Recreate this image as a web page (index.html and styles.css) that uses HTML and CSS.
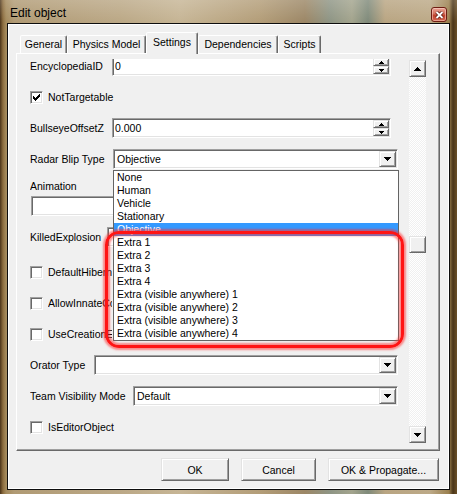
FILE: index.html
```html
<!DOCTYPE html>
<html lang="en">
<head>
  <meta charset="UTF-8">
  <title>Edit object</title>
  <link rel="stylesheet" href="styles.css">
</head>
<body>

  <div class="window">
    <div class="titlebar">
      <span class="title">Edit object</span>
      <div class="close-btn">
        <svg width="9" height="8" viewBox="0 0 9 8">
          <path d="M1.5 1L7.5 7M7.5 1L1.5 7" stroke="#5a1a10" stroke-width="3.4"/>
          <path d="M1.5 1L7.5 7M7.5 1L1.5 7" stroke="#fff" stroke-width="1.8"/>
        </svg>
      </div>
    </div>

    <div class="client">
      <div class="tabs">
        <div class="tab tab-general">General</div>
        <div class="tab tab-physics">Physics Model</div>
        <div class="tab tab-settings tab-active">Settings</div>
        <div class="tab tab-deps">Dependencies</div>
        <div class="tab tab-scripts">Scripts</div>
      </div>

      <div class="tab-panel">
        <div class="scroll-view">
          <div class="scroll-content">

            <div class="field-row">
              <span class="label">EncyclopediaID</span>
              <div class="edit">
                <span class="edit-text">0</span>
                <div class="spin">
                  <div class="spin-btn"><svg width="5" height="3"><path d="M2 0h1v1H2zM1 1h3v1H1zM0 2h5v1H0z"/></svg></div>
                  <div class="spin-btn"><svg width="5" height="3"><path d="M0 0h5v1H0zM1 1h3v1H1zM2 2h1v1H2z"/></svg></div>
                </div>
              </div>
            </div>

            <div class="field-row">
              <div class="check">
                <svg width="7" height="7"><path d="M6 0h1v3H6zM5 1h1v3H5zM4 2h1v3H4zM3 3h1v3H3zM2 4h1v3H2zM1 3h1v3H1zM0 2h1v3H0z"/></svg>
              </div>
              <span class="check-label">NotTargetable</span>
            </div>

            <div class="field-row">
              <span class="label">BullseyeOffsetZ</span>
              <div class="edit">
                <span class="edit-text">0.000</span>
                <div class="spin">
                  <div class="spin-btn"><svg width="5" height="3"><path d="M2 0h1v1H2zM1 1h3v1H1zM0 2h5v1H0z"/></svg></div>
                  <div class="spin-btn"><svg width="5" height="3"><path d="M0 0h5v1H0zM1 1h3v1H1zM2 2h1v1H2z"/></svg></div>
                </div>
              </div>
            </div>

            <div class="field-row">
              <span class="label">Radar Blip Type</span>
              <div class="combo combo-radar">
                <span class="combo-text">Objective</span>
                <div class="combo-btn"><svg width="7" height="4"><path d="M0 0h7v1H0zM1 1h5v1H1zM2 2h3v1H2zM3 3h1v1H3z"/></svg></div>
              </div>
            </div>

            <div class="field-block">
              <span class="label">Animation</span>
              <div class="edit edit-wide"><span class="edit-text"></span></div>
            </div>

            <div class="field-row">
              <span class="label">KilledExplosion</span>
              <div class="combo combo-killed">
                <span class="combo-text"></span>
                <div class="combo-btn"><svg width="7" height="4"><path d="M0 0h7v1H0zM1 1h5v1H1zM2 2h3v1H2zM3 3h1v1H3z"/></svg></div>
              </div>
            </div>

            <!-- ces libellés sont coupés par la liste ouverte -->
            <div class="field-row row-spaced">
              <div class="check"></div>
              <span class="check-label clipped">DefaultHibernationActive</span>
            </div>

            <div class="field-row">
              <div class="check"></div>
              <span class="check-label clipped">AllowInnateConversations</span>
            </div>

            <div class="field-row">
              <div class="check"></div>
              <span class="check-label clipped">UseCreationEffect</span>
            </div>

            <div class="field-row">
              <span class="label">Orator Type</span>
              <div class="combo combo-orator">
                <span class="combo-text"></span>
                <div class="combo-btn"><svg width="7" height="4"><path d="M0 0h7v1H0zM1 1h5v1H1zM2 2h3v1H2zM3 3h1v1H3z"/></svg></div>
              </div>
            </div>

            <div class="field-row">
              <span class="label">Team Visibility Mode</span>
              <div class="combo combo-team">
                <span class="combo-text">Default</span>
                <div class="combo-btn"><svg width="7" height="4"><path d="M0 0h7v1H0zM1 1h5v1H1zM2 2h3v1H2zM3 3h1v1H3z"/></svg></div>
              </div>
            </div>

            <div class="field-row">
              <div class="check"></div>
              <span class="check-label">IsEditorObject</span>
            </div>

          </div>
        </div>

        <!-- barre de défilement -->
        <div class="vscroll">
          <div class="sb-btn"><svg width="7" height="4"><path d="M3 0h1v1H3zM2 1h3v1H2zM1 2h5v1H1zM0 3h7v1H0z"/></svg></div>
          <div class="sb-track"><div class="sb-thumb"></div></div>
          <div class="sb-btn"><svg width="7" height="4"><path d="M0 0h7v1H0zM1 1h5v1H1zM2 2h3v1H2zM3 3h1v1H3z"/></svg></div>
        </div>
      </div>

      <div class="buttons">
        <div class="btn btn-ok">OK</div>
        <div class="btn btn-cancel">Cancel</div>
        <div class="btn btn-propagate">OK &amp; Propagate...</div>
      </div>
    </div>

    <!-- liste déroulante ouverte -->
    <ul class="dropdown-list">
      <li>None</li>
      <li>Human</li>
      <li>Vehicle</li>
      <li>Stationary</li>
      <li class="selected">Objective</li>
      <li>Extra 1</li>
      <li>Extra 2</li>
      <li>Extra 3</li>
      <li>Extra 4</li>
      <li>Extra (visible anywhere) 1</li>
      <li>Extra (visible anywhere) 2</li>
      <li>Extra (visible anywhere) 3</li>
      <li>Extra (visible anywhere) 4</li>
    </ul>

    <div class="highlight"></div>
  </div>

</body>
</html>
```

FILE: styles.css
```css
* {
  box-sizing: border-box;
}
body {
  margin: 0;
  font-family: "Liberation Sans", Arial, sans-serif;
  font-size: 10.5px;
  color: #000;
  background: #6b5028;
}
.window {
  position: relative;
  width: 457px;
  height: 494px;
  overflow: hidden;
  display: flex;
  flex-direction: column;
  background:
    linear-gradient(180deg, rgba(255, 255, 255, 0.18), rgba(255, 255, 255, 0) 22px),
    linear-gradient(90deg, #4a3318 0, #8c6d3f 3px, #a48a5c 6px, #b09a74 14px, #bba886 120px,
      #c6b595 180px, #b39d78 260px, #9c8766 305px, #8e9585 330px, #a3a48d 352px,
      #7f8a7a 368px, #b9a582 385px, #bca987 430px, #9a7f4e 449px, #4a3518 453px, #6b5028 457px);
}
.titlebar {
  height: 23px;
  display: flex;
  justify-content: space-between;
  align-items: flex-start;
  padding: 0 10px;
}
.title {
  font-size: 12px;
  line-height: 15px;
  margin-top: 6px;
}
.close-btn {
  width: 16px;
  height: 15px;
  margin-top: 7px;
  border: 1px solid #6e1d12;
  border-radius: 3px;
  background: linear-gradient(#eaa597, #d36e5a 45%, #c0412c 55%, #d5664f);
  box-shadow: inset 0 0 0 1px rgba(255, 220, 210, 0.5);
  display: flex;
  align-items: center;
  justify-content: center;
}

/* zone client */
.client {
  margin: 0 7px;
  height: 467px;
  border: 1px solid #0d0d0d;
  box-shadow: inset 0 0 0 1px #fff;
  background: #f0f0f0;
  display: flex;
  flex-direction: column;
}
.tabs {
  display: flex;
  align-items: flex-end;
  height: 21px;
  margin: 8px 0 0 12px;
  position: relative;
  z-index: 1;
}
.tab {
  height: 18px;
  padding-top: 2px;
  text-align: center;
  white-space: nowrap;
  background: #f0f0f0;
  border: 1px solid;
  border-bottom: none;
  border-color: #fff #696969 transparent #fff;
  border-radius: 2px 2px 0 0;
  box-shadow: inset -1px 0 #a0a0a0;
}
.tab-active {
  height: 22px;
  margin-bottom: -1px;
  padding-top: 3px;
}
.tab-general { width: 47px; }
.tab-physics { width: 79px; }
.tab-settings { width: 52px; }
.tab-deps { width: 80px; }
.tab-scripts { width: 43px; }

.tab-panel {
  margin-left: 8px;
  width: 424px;
  height: 398px;
  border: 1px solid;
  border-color: #fff #696969 #696969 #fff;
  box-shadow: inset -1px -1px #a0a0a0;
  padding: 5px 13px 6px 13px;
  display: flex;
}
.scroll-view {
  flex: 1;
  overflow: hidden;
}
.scroll-content {
  margin-top: -3px;
  display: flex;
  flex-direction: column;
}
.field-row {
  display: flex;
  align-items: center;
  height: 20px;
  margin-top: 11px;
}
.field-row:first-child {
  margin-top: 0;
}
.row-spaced {
  margin-top: 15px;
}
.field-block {
  display: flex;
  flex-direction: column;
  margin-top: 11px;
}
.field-block .label {
  height: 13px;
  line-height: 13px;
}
.label,
.check-label {
  white-space: nowrap;
}
.check-label {
  margin-left: 5px;
}
.clipped {
  max-width: 64px;
  overflow: hidden;
}

/* champs creusés */
.edit,
.combo,
.check {
  background: #fff;
  border: 1px solid;
  border-color: #a0a0a0 #fff #fff #a0a0a0;
  box-shadow: inset 1px 1px #696969, inset -1px -1px #e3e3e3;
}
.edit {
  width: 279px;
  height: 20px;
  margin: 0 14px 0 auto;
  padding: 1px;
  display: flex;
  align-items: center;
}
.edit-text {
  flex: 1;
  padding-left: 1px;
}
.edit-wide {
  width: 360px;
  margin: 3px 0 0 1px;
}
.spin {
  width: 16px;
  align-self: stretch;
  display: flex;
  flex-direction: column;
}
.combo {
  height: 20px;
  margin: 0 7px 0 auto;
  padding: 1px;
  display: flex;
  align-items: center;
}
.combo-text {
  flex: 1;
  padding-left: 2px;
}
.combo-radar { width: 285px; }
.combo-killed { width: 291px; }
.combo-orator { width: 304px; }
.combo-team { width: 265px; }
.check {
  width: 13px;
  height: 13px;
  flex-shrink: 0;
  display: flex;
  align-items: center;
  justify-content: center;
}

/* éléments en relief */
.spin-btn,
.combo-btn,
.sb-btn,
.sb-thumb,
.btn {
  background: #f0f0f0;
  border: 1px solid;
  border-color: #e3e3e3 #696969 #696969 #e3e3e3;
  box-shadow: inset 1px 1px #fff, inset -1px -1px #a0a0a0;
  display: flex;
  align-items: center;
  justify-content: center;
}
.spin-btn {
  flex: 1;
}
.combo-btn {
  width: 17px;
  height: 16px;
}
svg path {
  fill: #000;
}
.close-btn svg path {
  fill: none;
}

.vscroll {
  width: 17px;
  height: 383px;
  margin: 1px 0 0 4px;
  display: flex;
  flex-direction: column;
}
.sb-btn {
  height: 17px;
}
.sb-track {
  flex: 1;
  background: repeating-conic-gradient(#f0f0f0 0 25%, #fff 0 50%) 0 0 / 2px 2px;
}
.sb-thumb {
  height: 17px;
  margin-top: 159px;
}

.buttons {
  display: flex;
  gap: 12px;
  align-self: flex-end;
  margin: 7px 10px 0 0;
}
.btn {
  height: 23px;
  white-space: nowrap;
}
.btn-ok { width: 68px; }
.btn-cancel { width: 75px; }
.btn-propagate { width: 111px; }

/* liste ouverte du combo */
.dropdown-list {
  position: absolute;
  left: 113px;
  top: 170px;
  width: 286px;
  height: 171px;
  margin: 0;
  padding: 0;
  list-style: none;
  background: #fff;
  border: 1px solid #646464;
}
.dropdown-list li {
  height: 13px;
  line-height: 13px;
  padding-left: 3px;
  white-space: nowrap;
}
.dropdown-list .selected {
  background: #3399ff;
  color: #fff;
}

/* annotation rouge */
.highlight {
  position: absolute;
  left: 105px;
  top: 231px;
  width: 299px;
  height: 117px;
  border: 3px solid #ff1414;
  border-radius: 14px;
  box-shadow: 0 0 2px 2px rgba(255, 50, 50, 0.55), inset 0 0 2px 2px rgba(255, 50, 50, 0.55);
}
```
